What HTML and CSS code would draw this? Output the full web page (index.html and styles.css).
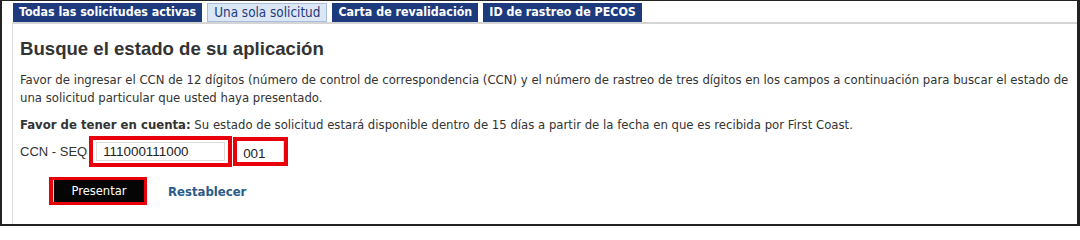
FILE: index.html
```html
<!DOCTYPE html>
<html lang="es">
<head>
<meta charset="utf-8">
<link rel="stylesheet" href="styles.css">
</head>
<body>
<div class="frame">
  <div class="tabs">
    <span class="tab">Todas las solicitudes activas</span>
    <span class="tab active">Una sola solicitud</span>
    <span class="tab">Carta de revalidación</span>
    <span class="tab">ID de rastreo de PECOS</span>
  </div>
  <div class="panel">
    <h1 class="title">Busque el estado de su aplicación</h1>
    <p class="intro">Favor de ingresar el CCN de 12 dígitos (número de control de correspondencia (CCN) y el número de rastreo de tres dígitos en los campos a continuación para buscar el estado de una solicitud particular que usted haya presentado.</p>
    <p class="note"><b>Favor de tener en cuenta:</b> Su estado de solicitud estará disponible dentro de 15 días a partir de la fecha en que es recibida por First Coast.</p>
    <div class="row">
      <span class="label">CCN - SEQ</span>
      <span class="mark mark-ccn"><span class="field field-ccn">111000111000</span></span>
      <span class="mark mark-seq"><span class="field field-seq">001</span></span>
    </div>
    <div class="actions">
      <span class="mark mark-btn"><span class="btn">Presentar</span></span>
      <a class="reset" href="#">Restablecer</a>
    </div>
  </div>
</div>
</body>
</html>
```
FILE: styles.css
```css
* { box-sizing: border-box; }
html, body { margin: 0; padding: 0; background: #fff; }
.frame {
  width: 1080px;
  height: 226px;
  border: 2px solid #222;
  border-top-width: 1px;
  border-right-width: 3px;
  background: #fff;
  overflow: hidden;
  font-family: "DejaVu Sans Condensed", "DejaVu Sans", sans-serif;
  color: #333;
}
.tabs {
  display: flex;
  gap: 5px;
  padding: 2px 0 0 11px;
  height: 21px;
}
.tab {
  display: block;
  height: 19px;
  line-height: 19px;
  padding: 0 6px;
  background: #1d3a7c;
  color: #fff;
  font-weight: bold;
  font-size: 12.35px;
}
.tab.active {
  background: #dce7f5;
  color: #1d3a7c;
  font-weight: normal;
  font-size: 13.4px;
  border: 1px solid #a7bddb;
  line-height: 17px;
}
.panel {
  margin-left: 10px;
  border-left: 1px solid #ddd;
  border-top: 2px solid #d4d4d4;
  padding: 14px 0 0 7px;
  height: 210px;
}
.title {
  margin: 0;
  font-family: "Liberation Sans", Arial, sans-serif;
  font-size: 18.6px;
  font-weight: bold;
  line-height: 22px;
  color: #333;
}
.intro {
  margin: 11px 0 0;
  font-size: 13px;
  line-height: 18px;
}
.note {
  margin: 9px 0 0;
  font-size: 13px;
  line-height: 18px;
}
.row {
  display: flex;
  align-items: center;
  margin-top: 2px;
  height: 31px;
}
.label {
  font-family: "Liberation Sans", Arial, sans-serif;
  font-size: 13px;
  margin-right: 2px;
}
.mark {
  display: flex;
  align-items: center;
  border: 4px solid #e8000b;
}
.mark-ccn { width: 143px; height: 31px; padding: 0 3px; }
.mark-seq { width: 55px; height: 29px; margin-left: 1px; }
.field {
  display: block;
  font-family: "Liberation Sans", Arial, sans-serif;
  font-size: 13.4px;
  color: #222;
  background: #fff;
}
.field-ccn {
  width: 129px;
  height: 19px;
  border: 1px solid #ddd;
  padding: 1px 0 0 6px;
}
.field-seq {
  width: 47px;
  height: 21px;
  border-right: 1px solid #ddd;
  padding: 5px 0 0 6px;
  line-height: 16px;
}
.actions {
  display: flex;
  align-items: center;
  margin-top: 10px;
  padding-left: 29px;
}
.mark-btn {
  width: 98px;
  height: 28px;
  padding: 0;
  border-width: 3px;
  border-left-width: 4px;
}
.btn {
  display: block;
  width: 100%;
  height: 100%;
  background: #050505;
  color: #fff;
  border-left: 1px solid #ddd;
  font-size: 12.8px;
  text-align: center;
  line-height: 22px;
}
.reset {
  margin-left: 21px;
  color: #2b5b88;
  font-weight: bold;
  font-size: 13px;
  text-decoration: none;
}
```
